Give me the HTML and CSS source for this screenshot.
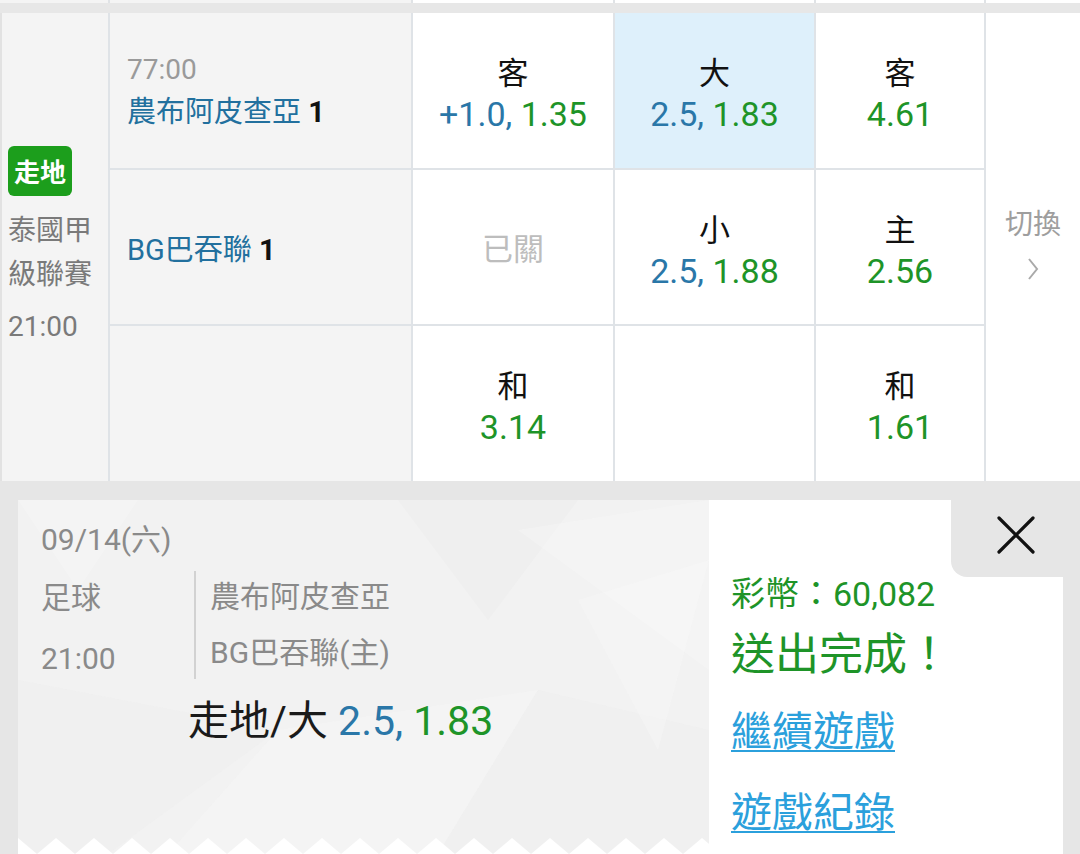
FILE: index.html
```html
<!DOCTYPE html>
<html lang="zh-Hant">
<head>
<meta charset="utf-8">
<title>走地</title>
<link rel="stylesheet" href="styles.css">
</head>
<body>
<div class="prev">
  <div class="pc gray"></div><div class="pc gray"></div><div class="pc"></div><div class="pc"></div><div class="pc"></div><div class="pc"></div>
</div>
<div class="match">
  <div class="league">
    <span class="badge">走地</span>
    <div class="league-name">泰國甲<br>級聯賽</div>
    <div class="kick">21:00</div>
  </div>
  <div class="switch">
    <div>切換</div>
    <svg class="chev" width="12" height="24" viewBox="0 0 12 24"><polyline points="2,2 10,12 2,22" fill="none" stroke="#aaaaaa" stroke-width="2"/></svg>
  </div>

  <div class="team">
    <div class="clock">77:00</div>
    <div class="tname">農布阿皮查亞 <b>1</b></div>
  </div>
  <div class="odd"><div class="lbl">客</div><div class="val"><span class="blue">+1.0,</span> <span class="green">1.35</span></div></div>
  <div class="odd sel"><div class="lbl">大</div><div class="val"><span class="blue">2.5,</span> <span class="green">1.83</span></div></div>
  <div class="odd"><div class="lbl">客</div><div class="val"><span class="green">4.61</span></div></div>

  <div class="team second-row">
    <div class="tname">BG巴吞聯 <b>1</b></div>
  </div>
  <div class="odd closed">已關</div>
  <div class="odd"><div class="lbl">小</div><div class="val"><span class="blue">2.5,</span> <span class="green">1.88</span></div></div>
  <div class="odd"><div class="lbl">主</div><div class="val"><span class="green">2.56</span></div></div>

  <div class="team"></div>
  <div class="odd"><div class="lbl">和</div><div class="val"><span class="green">3.14</span></div></div>
  <div class="odd"></div>
  <div class="odd"><div class="lbl">和</div><div class="val"><span class="green">1.61</span></div></div>
</div>

<div class="overlay">
  <div class="card">
    <div class="ticket">
      <svg class="pattern" width="691" height="354" viewBox="0 0 691 354">
        <polygon points="0,0 120,0 60,90" fill="#ffffff" opacity="0.2"/>
        <polygon points="380,0 560,0 470,120" fill="#e9e9e9" opacity="0.25"/>
        <polygon points="500,30 691,0 691,170" fill="#fafafa" opacity="0.35"/>
        <polygon points="0,180 260,230 90,354 0,354" fill="#ececec" opacity="0.3"/>
        <polygon points="260,230 520,190 420,354 150,354" fill="#f7f7f7" opacity="0.4"/>
        <polygon points="520,190 691,230 691,354 420,354" fill="#ebebeb" opacity="0.3"/>
        <polygon points="560,100 691,60 640,250" fill="#f8f8f8" opacity="0.35"/>
      </svg>
      <div class="date">09/14(六)</div>
      <div class="info">
        <div class="meta"><div>足球</div><div class="meta-time">21:00</div></div>
        <div class="teams"><div>農布阿皮查亞</div><div>BG巴吞聯(主)</div></div>
      </div>
      <div class="bet">走地/大 <span class="blue">2.5,</span> <span class="green">1.83</span></div>
      <svg class="zig" width="691" height="16" viewBox="0 0 691 16">
        <defs>
          <pattern id="zz" width="38" height="16" patternUnits="userSpaceOnUse" x="0" y="0">
            <path d="M0 0 L19 16 L0 16 Z M38 0 L38 16 L19 16 Z" fill="#ffffff"/>
          </pattern>
        </defs>
        <rect width="691" height="16" fill="url(#zz)"/>
      </svg>
    </div>
    <div class="result">
      <div class="coins">彩幣：60,082</div>
      <div class="done">送出完成！</div>
      <a class="link first" href="#">繼續遊戲</a>
      <a class="link second" href="#">遊戲紀錄</a>
    </div>
  </div>
  <button class="close" type="button" aria-label="關閉">
    <svg width="40" height="40" viewBox="0 0 40 40"><path d="M3 3 L37 37 M37 3 L3 37" stroke="#111" stroke-width="3.2" stroke-linecap="round" fill="none"/></svg>
  </button>
</div>
</body>
</html>
```
FILE: styles.css
```css
* { box-sizing: border-box; margin: 0; padding: 0; }
html, body { width: 1080px; height: 854px; overflow: hidden; }
body {
  background: #e7e7e7;
  font-family: Roboto, "Noto Sans CJK TC", sans-serif;
  color: #111;
}

/* previous row remnant */
.prev {
  display: grid;
  grid-template-columns: 108px 301px 200px 199px 168px 1fr;
  column-gap: 2px;
  height: 3px;
  background: #e0e3e6;
  margin-bottom: 10px;
}
.pc { background: #fff; }
.pc.gray { background: #f4f4f4; }

/* match grid */
.match {
  display: grid;
  grid-template-columns: 108px 301px 200px 199px 168px 1fr;
  grid-template-rows: 155px 154px 155px;
  gap: 2px;
  background: #dfe3e7;
  height: 468px;
}
.league {
  grid-column: 1;
  grid-row: 1 / 4;
  background: #f4f4f4;
  border-left: 2px solid #e2e2e2;
  padding-left: 6px;
  display: flex;
  flex-direction: column;
  justify-content: center;
}
.badge {
  align-self: flex-start;
  width: 64px;
  height: 50px;
  border-radius: 6px;
  background: #1c9e1c;
  color: #fff;
  font-weight: 700;
  font-size: 26px;
  display: flex;
  align-items: center;
  justify-content: center;
}
.league-name {
  margin-top: 13px;
  font-size: 28px;
  line-height: 44px;
  color: #7a7a7a;
}
.kick {
  margin-top: 8px;
  font-size: 28px;
  line-height: 44px;
  color: #7a7a7a;
}
.switch {
  grid-column: 6;
  grid-row: 1 / 4;
  background: #fff;
  display: flex;
  flex-direction: column;
  align-items: center;
  justify-content: center;
  padding-bottom: 8px;
  color: #9e9e9e;
  font-size: 28px;
  line-height: 40px;
}
.chev { margin-top: 12px; }

.team {
  background: #f4f4f4;
  display: flex;
  flex-direction: column;
  justify-content: center;
  padding-left: 17px;
}
.team.second-row { padding-top: 5px; }
.clock {
  font-size: 28px;
  line-height: 42px;
  color: #9a9a9a;
}
.tname {
  font-size: 29px;
  line-height: 42px;
  color: #22709e;
}
.tname b { color: #111; font-weight: 700; }

.odd {
  background: #fff;
  display: flex;
  flex-direction: column;
  align-items: center;
  justify-content: center;
  padding-top: 7px;
  font-size: 34px;
  line-height: 41px;
}
.lbl { font-size: 31px; color: #111; }
.sel { background: #def0fb; }
.closed { color: #bdbdbd; font-size: 31px; padding-top: 4px; }
.blue { color: #2a77a8; }
.green { color: #1e9428; }

/* overlay */
.overlay {
  position: relative;
  height: 373px;
  padding: 19px 17px 0 18px;
  background: #e6e6e6;
}
.card {
  display: flex;
  height: 354px;
}
.ticket {
  position: relative;
  width: 691px;
  background: #f2f2f2;
  padding: 20px 0 0 23px;
  overflow: hidden;
  color: #8a8a8a;
}
.pattern { position: absolute; left: 0; top: 0; }
.date, .info, .bet { position: relative; }
.date { font-size: 30px; line-height: 40px; }
.info { display: flex; margin-top: 9px; }
.meta { width: 153px; font-size: 30px; line-height: 58px; }
.meta-time { margin-top: 3px; }
.teams {
  border-left: 2px solid #d2d2d2;
  padding-left: 14px;
  font-size: 30px;
  line-height: 56px;
  height: 108px;
  margin-top: 2px;
}
.teams div:first-child { margin-top: -2px; }
.bet {
  margin-top: 8px;
  padding-left: 147px;
  font-size: 41px;
  line-height: 50px;
  color: #1a1a1a;
}
.zig { position: absolute; left: 0; bottom: 0; }

.result {
  flex: 1;
  background: #fff;
  padding: 72px 0 0 22px;
}
.coins { font-size: 34px; line-height: 44px; color: #1e9428; }
.done { font-size: 44px; line-height: 60px; color: #1e9428; margin-top: 9px; }
.link {
  display: block;
  width: max-content;
  font-size: 41px;
  line-height: 56px;
  color: #2ba0dc;
  text-decoration: underline;
  text-decoration-thickness: 2px;
  text-underline-offset: 4px;
}
.link.first { margin-top: 19px; }
.link.second { margin-top: 25px; }

.close {
  position: absolute;
  top: 0;
  right: 0;
  width: 129px;
  height: 96px;
  background: #e6e6e6;
  border: 0;
  border-bottom-left-radius: 16px;
  display: flex;
  align-items: center;
  justify-content: center;
  padding-top: 12px;
}
```
